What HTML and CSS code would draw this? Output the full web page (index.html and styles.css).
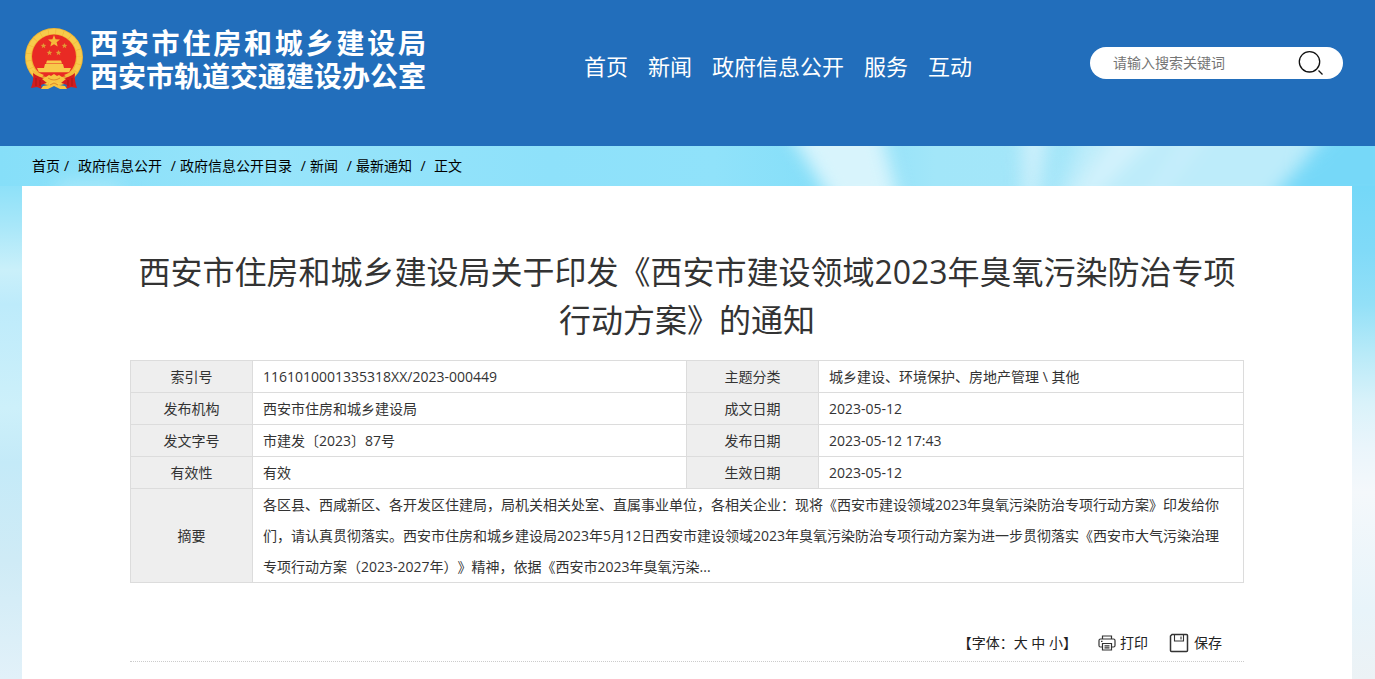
FILE: index.html
```html
<!DOCTYPE html>
<html lang="zh-CN">
<head>
<meta charset="utf-8">
<meta name="viewport" content="width=device-width, initial-scale=1">
<title>西安市住房和城乡建设局</title>
<link rel="stylesheet" href="styles.css">
</head>
<body>
<header class="header">
  <a class="brand" href="#">
    <svg class="emblem" viewBox="0 0 60 64" aria-hidden="true">
      <circle cx="30" cy="30" r="29" fill="#f0b534"/>
      <circle cx="30" cy="30" r="25.500" fill="none" stroke="#f7cb4c" stroke-width="5" stroke-dasharray="7 .6"/>
      <circle cx="30" cy="29.500" r="22" fill="#e92a24"/>
      <path fill="#f5b93a" d="M30 8l1.600 4.200 4.400.2-3.400 2.800 1.100 4.400L30 17.200l-3.700 2.400 1.100-4.400-3.400-2.800 4.400-.2z"/>
      <g fill="#e39a35">
        <path id="s" d="M19.500 16l.8 1.800 2 .1-1.600 1.300.6 2-1.800-1.100-1.800 1.100.6-2-1.600-1.300 2-.1z"/>
        <use href="#s" x="21"/><use href="#s" x="6" y="7"/><use href="#s" x="15" y="7"/>
      </g>
      <path fill="#f8c94a" d="M23 33.500h14l1 3H22zM21 37h18l1 4h7l-2 4.500H15L13 41h7z"/>
      <path fill="#e92a24" d="M14 45.500h32l-5 4H19z"/>
      <path fill="#f3bd3c" d="M8 43l5 2 7 3-4 3-6-3zM52 43l-5 2-7 3 4 3 6-3z"/>
      <path fill="#d21c1e" d="M9 46q6 5 13 5l3 4-8 3 1 4-5-2-6 1q3-8 2-15zM51 46q-6 5-13 5l-3 4 8 3-1 4 5-2 6 1q-3-8-2-15z"/>
      <path fill="none" stroke="#a91417" stroke-width="1" d="M12 51v8M16 53v6M48 51v8M44 53v6"/>
      <path fill="#f7c541" d="M22 50l3-2 2 1 3-2 3 2 2-1 3 2 4 2-5 4h-3l-4-3-4 3h-3l-5-4zM19 59l6-1 5-3 5 3 6 1 2 3h-7l-6-3-6 3h-7z"/>
      <path fill="none" stroke="#dd8a2c" stroke-width="1" d="M24 51q6 4 12 0M26 58l4-2 4 2"/>
    </svg>
    <span class="brand-text">
      <span class="brand-line">西安市住房和城乡建设局</span>
      <span class="brand-line">西安市轨道交通建设办公室</span>
    </span>
  </a>
  <nav class="nav">
    <a href="#">首页</a>
    <a href="#">新闻</a>
    <a href="#">政府信息公开</a>
    <a href="#">服务</a>
    <a href="#">互动</a>
  </nav>
  <form class="search">
    <input class="search-input" type="text" placeholder="请输入搜索关键词" aria-label="搜索关键词">
    <button class="search-button" type="button" aria-label="搜索">
      <svg viewBox="0 0 26 26" fill="none" stroke="#111" stroke-width="1.300"><circle cx="11.500" cy="11.800" r="10.200"/><path d="M20.500 20.500l4 4"/></svg>
    </button>
  </form>
</header>

<div class="page">
  <svg class="sky" viewBox="0 0 1375 533" preserveAspectRatio="none" aria-hidden="true">
    <defs>
      <linearGradient id="left" x2="0" y2="1">
        <stop offset="0" stop-color="#8ee1f9"/><stop offset=".08" stop-color="#a8e7f9"/><stop offset=".17" stop-color="#caf0fa"/><stop offset=".24" stop-color="#bdebfb"/><stop offset=".45" stop-color="#cdf0fa"/><stop offset=".56" stop-color="#c4eaf8"/><stop offset=".76" stop-color="#cfebf6"/><stop offset="1" stop-color="#e2f1f9"/>
      </linearGradient>
      <linearGradient id="right" x2="0" y2="1">
        <stop offset="0" stop-color="#74d8f8"/><stop offset=".13" stop-color="#80daf8"/><stop offset=".24" stop-color="#93e0f7"/><stop offset=".34" stop-color="#b8eaf8"/><stop offset=".44" stop-color="#d9f2fa"/><stop offset=".53" stop-color="#eaf5fb"/><stop offset=".62" stop-color="#f4f8fb"/><stop offset=".86" stop-color="#e8f4fa"/><stop offset="1" stop-color="#ecf2f5"/>
      </linearGradient>
      <linearGradient id="top">
        <stop offset="0" stop-color="#86dff9"/><stop offset=".2" stop-color="#97e4fa"/><stop offset=".4" stop-color="#8ee1fa"/><stop offset=".52" stop-color="#90e2fa"/><stop offset=".59" stop-color="#86dff9"/><stop offset=".68" stop-color="#a2e6f9"/><stop offset="1" stop-color="#a9e7fa"/>
      </linearGradient>
      <filter id="soft" x="-20%" y="-50%" width="140%" height="200%" color-interpolation-filters="sRGB"><feGaussianBlur stdDeviation="9"/></filter>
    </defs>
    <rect width="1375" height="46" fill="url(#top)"/>
    <g filter="url(#soft)">
      <path fill="#d8f4fc" d="M785-20h95l20 80h-65z"/>
      <path fill="#cff0fb" d="M1022-20h26l-12 80h-12z"/>
      <path fill="#bdecfa" d="M1085-20h240l-50 80h-220z"/>
      <path fill="#d3f2fc" d="M1120-20h45l-80 80h-20z"/>
      <path fill="#c7eefb" d="M1190-20h25l-60 80h-15z"/>
      <path fill="#76d8f8" d="M1335-20h60v80h-130z"/>
      <path fill="#a8e8fa" d="M60 35h60v25H50z"/>
    </g>
    <rect y="40" width="60" height="493" fill="url(#left)"/>
    <rect x="1315" y="40" width="60" height="493" fill="url(#right)"/>
  </svg>

  <nav class="crumbs" aria-label="当前位置">
    <a href="#">首页</a><span class="sep sep-first">/</span>
    <a href="#">政府信息公开</a><span class="sep">/</span>
    <a href="#">政府信息公开目录</a><span class="sep">/</span>
    <a href="#">新闻</a><span class="sep">/</span>
    <a href="#">最新通知</a><span class="sep sep-last">/</span>
    <span>正文</span>
  </nav>

  <main class="panel">
    <h1 class="title">西安市住房和城乡建设局关于印发《西安市建设领域2023年臭氧污染防治专项行动方案》的通知</h1>
    <table class="info">
      <colgroup><col class="col-a"><col class="col-b"><col class="col-c"><col class="col-d"></colgroup>
      <tbody>
        <tr><th scope="row">索引号</th><td>1161010001335318XX/2023-000449</td><th scope="row">主题分类</th><td>城乡建设、环境保护、房地产管理 \ 其他</td></tr>
        <tr><th scope="row">发布机构</th><td>西安市住房和城乡建设局</td><th scope="row">成文日期</th><td>2023-05-12</td></tr>
        <tr><th scope="row">发文字号</th><td>市建发〔2023〕87号</td><th scope="row">发布日期</th><td>2023-05-12 17:43</td></tr>
        <tr><th scope="row">有效性</th><td>有效</td><th scope="row">生效日期</th><td>2023-05-12</td></tr>
        <tr><th scope="row">摘要</th><td class="summary" colspan="3">各区县、西咸新区、各开发区住建局，局机关相关处室、直属事业单位，各相关企业：现将《西安市建设领域2023年臭氧污染防治专项行动方案》印发给你们，请认真贯彻落实。西安市住房和城乡建设局2023年5月12日西安市建设领域2023年臭氧污染防治专项行动方案为进一步贯彻落实《西安市大气污染治理专项行动方案（2023-2027年）》精神，依据《西安市2023年臭氧污染...</td></tr>
      </tbody>
    </table>
    <div class="tools">
      <div class="font-size">【字体：<button type="button">大</button> <button type="button">中</button> <button type="button">小</button>】</div>
      <button class="tool" type="button">
        <svg width="18" height="18" viewBox="0 0 18 18" fill="none" stroke="#333" stroke-width="1.200"><path d="M4.500 5V2h9v3M4 13H2.500Q1 13 1 11.500v-5Q1 5 2.500 5h13Q17 5 17 6.500v5q0 1.500-1.500 1.500H14M4.500 9.500h9v6.500h-9zM6.500 11.800h5M6.500 13.800h5M3 7.300h1.500"/></svg>
        打印
      </button>
      <button class="tool tool-save" type="button">
        <svg width="20" height="20" viewBox="0 0 20 20" fill="none" stroke="#333" stroke-width="1.500"><path d="M3 1.500h14.500q1 0 1 1v15q0 1-1 1h-15q-1 0-1-1V3z"/><path stroke-width="1.100" d="M5.500 2v6h9V2M12 3.500v3"/></svg>
        保存
      </button>
    </div>
  </main>
</div>
</body>
</html>
```

FILE: styles.css
```css
* {
  box-sizing: border-box;
}

body {
  margin: 0;
  font-family: "Open Sans", "Noto Sans CJK SC", sans-serif;
  font-size: 14px;
  color: #333;
  text-spacing-trim: space-all;
  overflow-x: hidden;
}

a {
  color: inherit;
  text-decoration: none;
}

button {
  padding: 0;
  border: 0;
  background: none;
  color: inherit;
  font: inherit;
  cursor: pointer;
}

.header {
  display: flex;
  align-items: flex-start;
  min-height: 146px;
  padding: 27px 32px 0 24px;
  background: #226ebb;
  color: #fff;
}

.brand {
  display: flex;
  gap: 6px;
}

.emblem {
  width: 60px;
  height: 64px;
}

.brand-text {
  width: 336px;
  padding-top: 1px;
  font-family: "Liberation Sans", "Noto Sans CJK SC", sans-serif;
  font-size: 28px;
  font-weight: 700;
  line-height: 33px;
}

.brand-line {
  display: block;
  white-space: nowrap;
  text-align-last: justify;
}

.nav {
  display: flex;
  gap: 20px;
  margin-left: 158px;
  padding-top: 24px;
  font-size: 22px;
  line-height: 30px;
  white-space: nowrap;
}

.search {
  display: flex;
  align-items: center;
  width: 253px;
  height: 32px;
  margin: 20px 0 0 auto;
  padding: 0 19px 0 23px;
  border-radius: 16px;
  background: #fff;
}

.search-input {
  flex: 1;
  min-width: 0;
  padding: 0 0 2px;
  border: 0;
  outline: 0;
  background: none;
  font: inherit;
}

.search-input::placeholder {
  color: #757575;
}

.search-button {
  width: 26px;
  height: 26px;
}

.search-button svg {
  display: block;
}

.page {
  position: relative;
  padding: 0 23px 0 22px;
}

.sky {
  position: absolute;
  inset: 0;
  z-index: -1;
  width: 100%;
  height: 100%;
}

.crumbs {
  display: flex;
  height: 40px;
  padding-left: 10px;
  color: #000;
  line-height: 40px;
  white-space: nowrap;
}

.sep {
  width: 18px;
  padding-right: 4px;
  text-align: right;
}

.sep-first {
  padding-left: 4px;
  text-align: left;
}

.sep-last {
  width: 22px;
  padding-right: 0;
  text-align: center;
}

.panel {
  min-height: calc(100vh - 186px);
  padding: 62px 108px 0;
  background: #fff;
}

.title {
  margin: 0 0 16px;
  font-size: 32px;
  font-weight: 400;
  line-height: 48px;
  text-align: center;
}

.info {
  width: 100%;
  border-collapse: collapse;
  table-layout: fixed;
}

.col-a {
  width: 122px;
}

.col-b {
  width: 39%;
}

.col-c {
  width: 132px;
}

.info th,
.info td {
  padding: 0 10px;
  border: 1px solid #dcdcdc;
  font-weight: 400;
  line-height: 31px;
}

.info th {
  background: #eee;
  text-align: center;
}

.info .summary {
  padding-right: 14px;
}

.tools {
  display: flex;
  justify-content: flex-end;
  align-items: center;
  margin-top: 44px;
  padding: 6px 22px 8px 0;
  border-bottom: 1px dotted #ccc;
  color: #222;
  line-height: 20px;
}

.tool {
  display: flex;
  align-items: center;
  gap: 4px;
  margin-left: 21px;
}

.tool-save {
  gap: 5px;
}
```
